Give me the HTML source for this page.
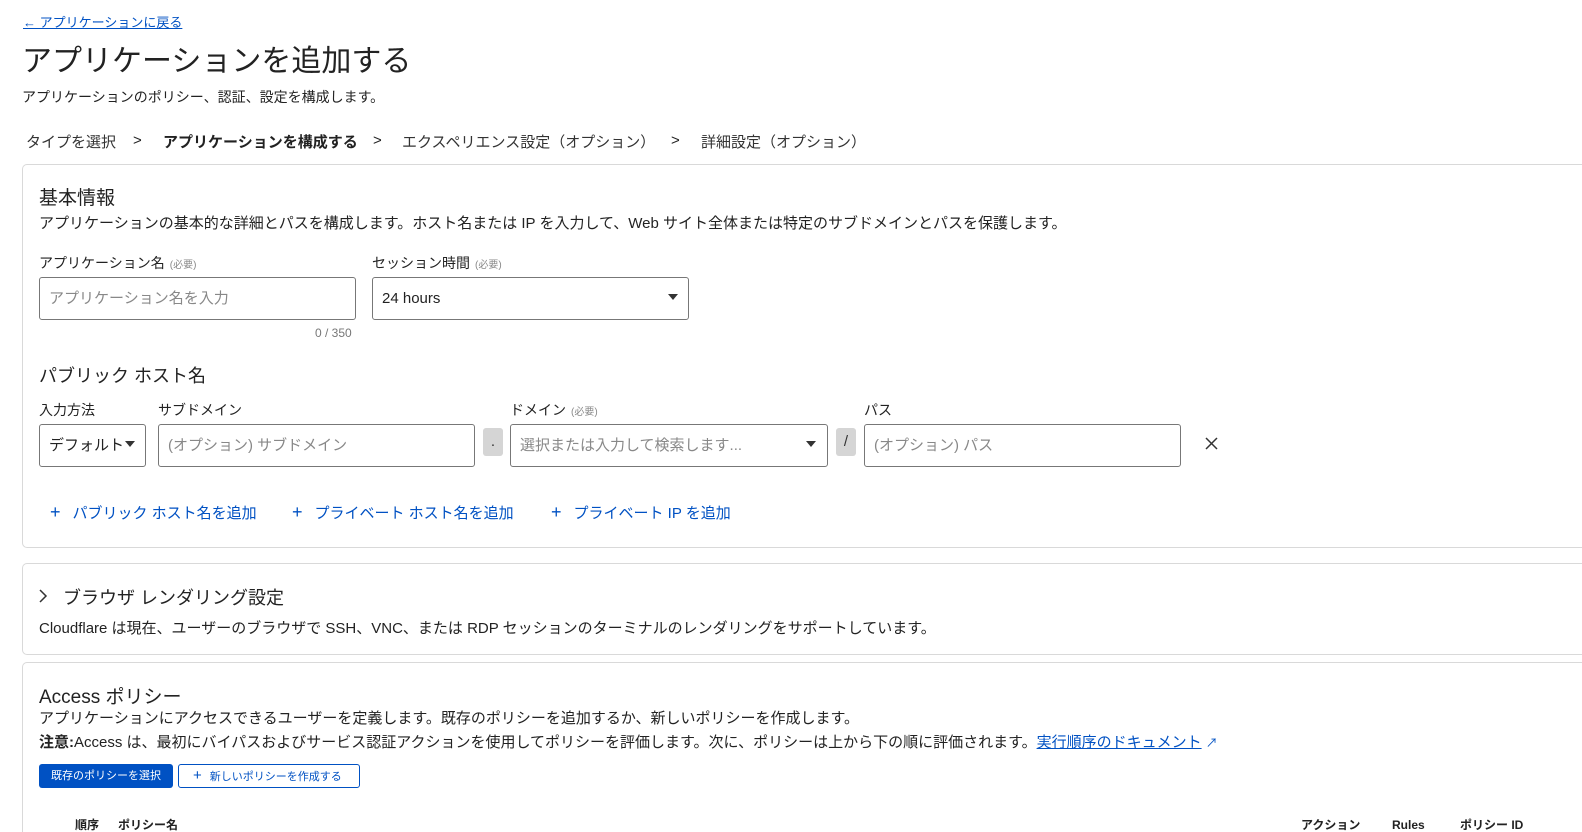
<!DOCTYPE html>
<html><head><meta charset="utf-8"><style>
*{box-sizing:border-box;margin:0;padding:0}
html,body{width:1582px;height:832px;overflow:hidden}
body{background:#fff;font-family:"Liberation Sans","Noto Sans CJK JP",sans-serif;color:#222;position:relative}
.a{position:absolute;white-space:nowrap}
.card{position:absolute;left:22px;width:1560px;border:1px solid #d9d9d9;border-right:none;border-radius:5px 0 0 5px}
.in{position:absolute;height:43px;border:1px solid #777;border-radius:3px;font-size:15px;color:#888;padding:0 9px;line-height:41px;white-space:nowrap}
.lbl{font-size:14px;color:#222}
.req{font-size:10px;color:#888;margin-left:5px}
.blue{color:#0051c3}
.tri{position:absolute;width:0;height:0;border-left:5px solid transparent;border-right:5px solid transparent;border-top:6px solid #333}
.sep{position:absolute;width:20px;height:28px;background:#d5d5d5;border-radius:3px;text-align:center;line-height:28px;font-size:15px;color:#333}
</style></head><body>
<div class="a blue" style="left:23px;top:12px;font-size:13px;text-decoration:underline">← アプリケーションに戻る</div>
<div class="a" style="left:22px;top:36px;font-size:30px;color:#222">アプリケーションを追加する</div>
<div class="a" style="left:22px;top:87px;font-size:14px">アプリケーションのポリシー、認証、設定を構成します。</div>
<div class="a" style="left:26px;top:131px;font-size:15px;color:#333">タイプを選択</div>
<div class="a" style="left:133px;top:132px;font-size:15px">&gt;</div>
<div class="a" style="left:163px;top:131px;font-size:15px;font-weight:bold">アプリケーションを構成する</div>
<div class="a" style="left:373px;top:132px;font-size:15px">&gt;</div>
<div class="a" style="left:402px;top:131px;font-size:15px;color:#333">エクスペリエンス設定（オプション）</div>
<div class="a" style="left:671px;top:132px;font-size:15px">&gt;</div>
<div class="a" style="left:701px;top:131px;font-size:15px;color:#333">詳細設定（オプション）</div>

<div class="card" style="top:164px;height:384px"></div>
<div class="a" style="left:39px;top:183px;font-size:19px">基本情報</div>
<div class="a" style="left:39px;top:212px;font-size:15px">アプリケーションの基本的な詳細とパスを構成します。ホスト名または IP を入力して、Web サイト全体または特定のサブドメインとパスを保護します。</div>
<div class="a lbl" style="left:39px;top:253px">アプリケーション名<span class="req">(必要)</span></div>
<div class="a lbl" style="left:372px;top:253px">セッション時間<span class="req">(必要)</span></div>
<div class="in" style="left:39px;top:277px;width:317px">アプリケーション名を入力</div>
<div class="in" style="left:372px;top:277px;width:317px;color:#222">24 hours</div>
<div class="tri" style="left:668px;top:294px"></div>
<div class="a" style="left:315px;top:326px;font-size:12px;color:#777">0 / 350</div>
<div class="a" style="left:39px;top:362px;font-size:18px">パブリック ホスト名</div>
<div class="a lbl" style="left:39px;top:400px">入力方法</div>
<div class="a lbl" style="left:158px;top:400px">サブドメイン</div>
<div class="a lbl" style="left:510px;top:400px">ドメイン<span class="req">(必要)</span></div>
<div class="a lbl" style="left:864px;top:400px">パス</div>
<div class="in" style="left:39px;top:424px;width:107px;color:#222">デフォルト</div>
<div class="tri" style="left:125px;top:441px"></div>
<div class="in" style="left:158px;top:424px;width:317px">(オプション) サブドメイン</div>
<div class="sep" style="left:483px;top:428px">.</div>
<div class="in" style="left:510px;top:424px;width:318px">選択または入力して検索します...</div>
<div class="tri" style="left:806px;top:441px"></div>
<div class="sep" style="left:836px;top:428px">/</div>
<div class="in" style="left:864px;top:424px;width:317px">(オプション) パス</div>
<svg class="a" style="left:1204px;top:436px" width="15" height="15"><path d="M2 2L13 13M13 2L2 13" stroke="#333" stroke-width="1.5"/></svg>
<div class="a blue" style="left:50px;top:502px;font-size:15px"><span style="font-size:18px;margin-right:12px">+</span>パブリック ホスト名を追加</div>
<div class="a blue" style="left:292px;top:502px;font-size:15px"><span style="font-size:18px;margin-right:12px">+</span>プライベート ホスト名を追加</div>
<div class="a blue" style="left:551px;top:502px;font-size:15px"><span style="font-size:18px;margin-right:12px">+</span>プライベート IP を追加</div>

<div class="card" style="top:563px;height:92px"></div>
<svg class="a" style="left:37px;top:588px" width="12" height="16"><path d="M3 2L9 8L3 14" stroke="#333" stroke-width="1.5" fill="none"/></svg>
<div class="a" style="left:63px;top:584px;font-size:18px">ブラウザ レンダリング設定</div>
<div class="a" style="left:39px;top:617px;font-size:15px">Cloudflare は現在、ユーザーのブラウザで SSH、VNC、または RDP セッションのターミナルのレンダリングをサポートしています。</div>

<div class="card" style="top:662px;height:170px;border-bottom:none;border-radius:5px 0 0 0"></div>
<div class="a" style="left:39px;top:682px;font-size:19px">Access ポリシー</div>
<div class="a" style="left:39px;top:707px;font-size:15px">アプリケーションにアクセスできるユーザーを定義します。既存のポリシーを追加するか、新しいポリシーを作成します。</div>
<div class="a" style="left:39px;top:731px;font-size:15px"><b>注意:</b>Access は、最初にバイパスおよびサービス認証アクションを使用してポリシーを評価します。次に、ポリシーは上から下の順に評価されます。<span class="blue" style="text-decoration:underline">実行順序のドキュメント</span> <span class="blue" style="font-size:12px">↗</span></div>
<div class="a" style="left:39px;top:764px;width:134px;height:24px;background:#0051c3;color:#fff;border-radius:3px;font-size:11px;text-align:center;line-height:24px">既存のポリシーを選択</div>
<div class="a blue" style="left:178px;top:764px;width:182px;height:24px;border:1px solid #0051c3;border-radius:3px;font-size:11px;line-height:22px;padding-left:14px"><span style="font-size:15px;margin-right:8px">+</span>新しいポリシーを作成する</div>
<div class="a" style="left:75px;top:818px;font-size:12px;line-height:14px;font-weight:bold">順序</div>
<div class="a" style="left:118px;top:818px;font-size:12px;line-height:14px;font-weight:bold">ポリシー名</div>
<div class="a" style="left:1301px;top:818px;font-size:12px;line-height:14px;font-weight:bold">アクション</div>
<div class="a" style="left:1392px;top:818px;font-size:12px;line-height:14px;font-weight:bold">Rules</div>
<div class="a" style="left:1460px;top:818px;font-size:12px;line-height:14px;font-weight:bold">ポリシー ID</div>
</body></html>
